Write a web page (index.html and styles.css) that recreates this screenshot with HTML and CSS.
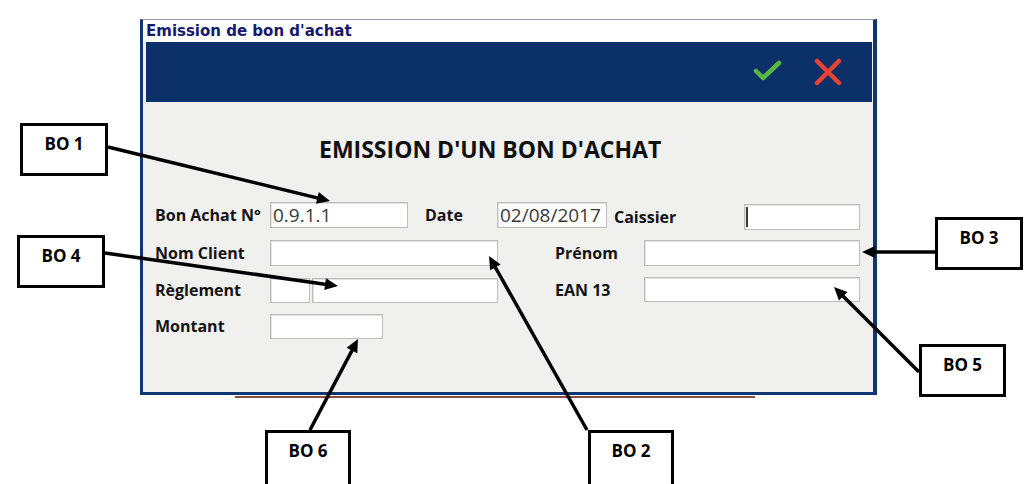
FILE: index.html
```html
<!DOCTYPE html>
<html lang="fr">
<head>
<meta charset="utf-8">
<title>Emission de bon d'achat</title>
<link rel="stylesheet" href="styles.css">
</head>
<body>
<div class="canvas">
  <div class="window">
    <div class="titlebar">Emission de bon d'achat</div>
    <div class="toolbar">
      <svg class="icon" width="30" height="24" viewBox="0 0 30 24">
        <path d="M3 11 L10 18 L26 3" fill="none" stroke="#58b844" stroke-width="4.5" stroke-linecap="round" stroke-linejoin="round"/>
      </svg>
      <svg class="icon" width="30" height="28" viewBox="0 0 30 28">
        <path d="M4 3 L26 25 M26 3 L4 25" fill="none" stroke="#e8422f" stroke-width="4.5" stroke-linecap="round"/>
      </svg>
    </div>
    <div class="content">
      <h1 class="heading">EMISSION D'UN BON D'ACHAT</h1>
      <div class="form">
        <div class="row">
          <span class="label w115">Bon Achat N°</span>
          <div class="field w138"><span class="value">0.9.1.1</span></div>
          <span class="label date-label">Date</span>
          <div class="field w110"><span class="value">02/08/2017</span></div>
          <div class="group low">
            <span class="label caissier-label">Caissier</span>
            <div class="field w116"><span class="caret"></span></div>
          </div>
        </div>
        <div class="row">
          <span class="label w115">Nom Client</span>
          <div class="field w228"></div>
          <span class="label right-label">Prénom</span>
          <div class="field w216"></div>
        </div>
        <div class="row short">
          <span class="label w115">Règlement</span>
          <div class="field w40"></div>
          <div class="field w186 gap2"></div>
          <span class="label right-label">EAN 13</span>
          <div class="field w216 up1"></div>
        </div>
        <div class="row short last">
          <span class="label w115">Montant</span>
          <div class="field w113"></div>
        </div>
      </div>
    </div>
  </div>
  <div class="shadow-line"></div>

  <div class="callout bo1">BO 1</div>
  <div class="callout bo4">BO 4</div>
  <div class="callout bo3">BO 3</div>
  <div class="callout bo5">BO 5</div>
  <div class="callout bo6">BO 6</div>
  <div class="callout bo2">BO 2</div>

  <svg class="arrows" width="1024" height="484" viewBox="0 0 1024 484">
    <g stroke="#000" stroke-width="3.5" fill="none">
      <line x1="108" y1="147" x2="322.2" y2="199.1"/>
      <line x1="105" y1="253" x2="330.1" y2="284.9"/>
      <line x1="935" y1="252" x2="870" y2="252"/>
      <line x1="919" y1="372" x2="839.7" y2="292.7"/>
      <line x1="587" y1="430" x2="492.9" y2="263"/>
      <line x1="310" y1="430" x2="354.3" y2="346.1"/>
    </g>
    <g fill="#000">
      <polygon points="330,201 315.95,203.76 318.79,192.1"/>
      <polygon points="338,286 324.29,290.12 325.97,278.24"/>
      <polygon points="862,252 875,246 875,258"/>
      <polygon points="834,287 847.43,291.95 838.95,300.43"/>
      <polygon points="489,256 500.61,264.39 490.15,270.27"/>
      <polygon points="358,339 357.25,353.3 346.63,347.7"/>
    </g>
  </svg>
</div>
</body>
</html>
```
FILE: styles.css
```css
* { box-sizing: border-box; }

html, body {
  margin: 0;
  padding: 0;
  background: #ffffff;
}

.canvas {
  position: relative;
  width: 1024px;
  height: 484px;
  overflow: hidden;
  background: #ffffff;
  padding: 19px 0 0 140px;
}

.window {
  width: 737px;
  height: 376px;
  border-top: 1px solid #8a98ad;
  border-left: 3px solid #0e3672;
  border-right: 4px solid #0e3672;
  border-bottom: 3px solid #0e3672;
  background: #f0f0ef;
  display: flex;
  flex-direction: column;
}

.titlebar {
  height: 22px;
  background: #ffffff;
  color: #16196c;
  font-family: "DejaVu Sans", Verdana, sans-serif;
  font-weight: bold;
  font-size: 15px;
  line-height: 22px;
  padding: 0 0 0 3px;
  white-space: nowrap;
}

.toolbar {
  height: 60px;
  margin: 0 1px 0 3px;
  background: #0b3168;
  display: flex;
  align-items: center;
  justify-content: flex-end;
  gap: 30px;
  padding-right: 29px;
}

.toolbar .icon {
  display: block;
}

.content {
  flex: 1;
  background: #f0f0ef;
  padding-left: 12px;
}

.heading {
  margin: 32px 0 0 164px;
  font-family: "Open Sans", "Liberation Sans", sans-serif;
  font-weight: 700;
  font-size: 23px;
  line-height: 30px;
  color: #111111;
  white-space: nowrap;
}

.form {
  margin-top: 38px;
  display: flex;
  flex-direction: column;
  gap: 12px;
}

.row {
  display: flex;
  align-items: flex-start;
  height: 26px;
}

.row.short { height: 25px; }
.row.last { margin-top: -1px; }

.label {
  font-family: "Open Sans", "Liberation Sans", sans-serif;
  font-weight: 700;
  font-size: 16px;
  line-height: 26px;
  color: #141414;
  white-space: nowrap;
}

.row.short .label { line-height: 25px; }

.w115 { width: 115px; }
.date-label { width: 72px; margin-left: 17px; }
.caissier-label { width: 130px; margin-left: 7px; }
.right-label { width: 89px; margin-left: 57px; }

.group {
  display: flex;
  align-items: flex-start;
}

.group.low { margin-top: 2px; }

.field {
  height: 100%;
  background: #ffffff;
  border: 1px solid #bdbdbd;
  box-shadow: inset 1px 1px 0 #e2e2e2;
  display: flex;
  align-items: center;
  overflow: hidden;
}

.group .field { height: 26px; }

.w138 { width: 138px; }
.w110 { width: 110px; }
.w116 { width: 116px; }
.w228 { width: 228px; }
.w216 { width: 216px; }
.w40 { width: 40px; }
.w186 { width: 186px; }
.w113 { width: 113px; }
.gap2 { margin-left: 2px; }
.up1 { margin-top: -1px; }

.value {
  font-family: "Open Sans", "Liberation Sans", sans-serif;
  font-weight: 400;
  font-size: 19px;
  line-height: 24px;
  color: #3a3a3a;
  padding-left: 2px;
  white-space: nowrap;
}

.caret {
  display: block;
  width: 2px;
  height: 20px;
  margin-left: 1px;
  background: #3a3a3a;
}

.shadow-line {
  width: 520px;
  height: 2px;
  margin: 1px 0 0 95px;
  background: #8a4a3c;
}

.callout {
  position: absolute;
  width: 88px;
  height: 53px;
  border: 3px solid #000000;
  background: #ffffff;
  padding-top: 6px;
  text-align: center;
  font-family: "Open Sans", "Liberation Sans", sans-serif;
  font-weight: 700;
  font-size: 17px;
  line-height: 24px;
  color: #000000;
}

.bo1 { left: 20px; top: 123px; }
.bo4 { left: 17px; top: 235px; }
.bo3 { left: 935px; top: 217px; }
.bo5 { left: 919px; top: 344px; width: 87px; }
.bo6 { left: 265px; top: 430px; width: 86px; height: 60px; }
.bo2 { left: 588px; top: 430px; width: 86px; height: 60px; }

.arrows {
  position: absolute;
  left: 0;
  top: 0;
  pointer-events: none;
}
```
